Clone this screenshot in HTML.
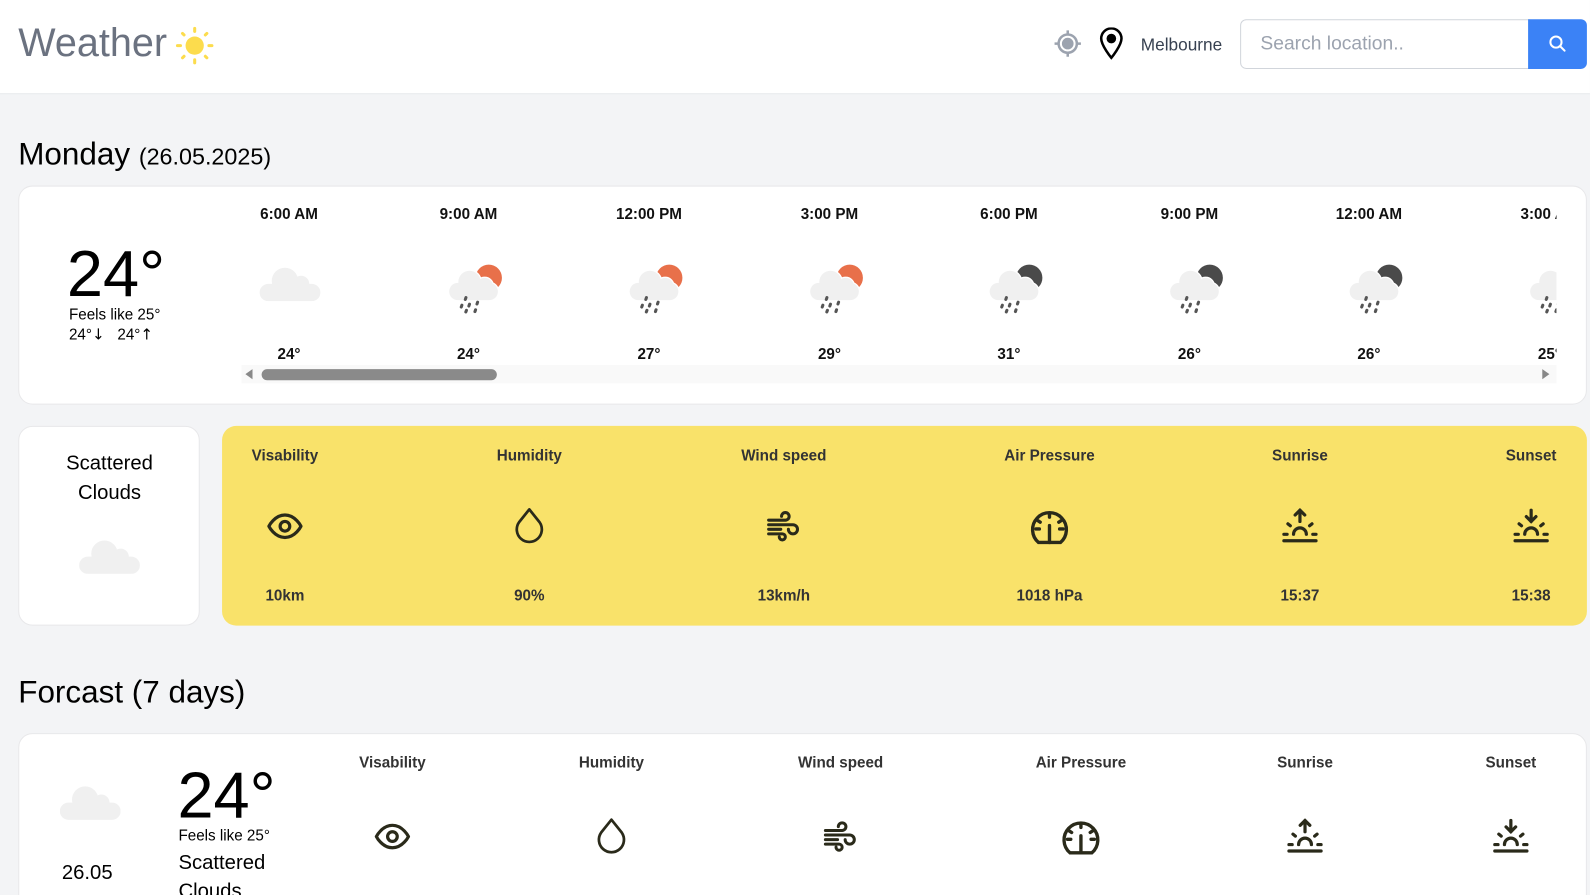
<!DOCTYPE html>
<html><head><meta charset="utf-8"><style>
*{box-sizing:border-box;margin:0;padding:0}
body{width:1590px;height:895px;overflow:hidden;background:#f3f4f6;font-family:"Liberation Sans",sans-serif;color:#000;position:relative}
#w{position:absolute;left:0;top:0;width:1568px;height:883px;overflow:hidden;transform:scale(1.014);transform-origin:0 0}
.a{position:absolute}
.hdr{left:0;top:0;width:1590px;height:93px;background:#fff;border-bottom:1px solid #e5e7eb}
.card{background:#fff;border:1px solid #e8e8ea;border-radius:14px}
.c{transform:translateX(-50%);text-align:center;white-space:nowrap}
.t{font-size:15px;font-weight:bold;color:#111}
.lb{font-size:15px;font-weight:bold;color:#333}
</style></head><body>
<svg width="0" height="0" style="position:absolute">
<defs>
<symbol id="cloud" viewBox="0 0 60 34"><g fill="#f0f0f0"><rect x="0" y="17" width="60" height="17" rx="8.5"/><circle cx="25" cy="14" r="13"/><circle cx="41" cy="17" r="8"/></g></symbol>
<symbol id="rs" viewBox="0 0 80 60"><circle cx="52" cy="24" r="13" fill="#e8704a"/><g fill="#f0f0f0" stroke="#fff" stroke-width="2.5"><rect x="13" y="29" width="48" height="17" rx="8.5"/><circle cx="33" cy="28" r="11"/><circle cx="48" cy="32" r="8"/></g><g fill="#f0f0f0"><rect x="13" y="29" width="48" height="17" rx="8.5"/><circle cx="33" cy="28" r="11"/><circle cx="48" cy="32" r="8"/></g><g stroke="#555" stroke-width="3" stroke-linecap="round"><path d="M29.5 43.5l-.6 1.8M25.5 51l-.6 1.8M33 50l-.6 1.8M41 48l-.6 1.8M30 56l-.6 1.6M39 55.5l-.6 1.8"/></g></symbol>
<symbol id="rm" viewBox="0 0 80 60"><circle cx="52" cy="24" r="13" fill="#4a4a4a"/><g fill="#f0f0f0" stroke="#fff" stroke-width="2.5"><rect x="13" y="29" width="48" height="17" rx="8.5"/><circle cx="33" cy="28" r="11"/><circle cx="48" cy="32" r="8"/></g><g fill="#f0f0f0"><rect x="13" y="29" width="48" height="17" rx="8.5"/><circle cx="33" cy="28" r="11"/><circle cx="48" cy="32" r="8"/></g><g stroke="#555" stroke-width="3" stroke-linecap="round"><path d="M29.5 43.5l-.6 1.8M25.5 51l-.6 1.8M33 50l-.6 1.8M41 48l-.6 1.8M30 56l-.6 1.6M39 55.5l-.6 1.8"/></g></symbol>
<symbol id="eye" viewBox="0 0 24 24" fill="none" stroke="#2a2a1a" stroke-width="2" stroke-linecap="round" stroke-linejoin="round"><path d="M2 12s3.5-7 10-7 10 7 10 7-3.5 7-10 7S2 12 2 12z"/><circle cx="12" cy="12" r="3"/></symbol>
<symbol id="drop" viewBox="0 0 24 24" fill="none" stroke="#2a2a1a" stroke-width="1.7" stroke-linejoin="round"><path d="M12 1.5L5.6 9.5A7.8 7.8 0 1 0 18.4 9.5z"/></symbol>
<symbol id="wind" viewBox="0 0 24 24" fill="none" stroke="#2a2a1a" stroke-width="2" stroke-linecap="round"><path d="M2 8h11a2.5 2.5 0 1 0-2.5-2.5M2 11h16a3 3 0 1 1-3 3M2 14h8M2 17h9a2 2 0 1 1-2 2"/></symbol>
<symbol id="gauge" viewBox="0 0 24 24" fill="none" stroke="#2a2a1a" stroke-width="2" stroke-linecap="round"><path d="M5.5 21A10 10 0 1 1 18.5 21z"/><path d="M12 4v2M5 8l1.5 1M19 8l-1.5 1M4 13h2M18 13h2M12 11v10"/></symbol>
<symbol id="sunup" viewBox="0 0 24 24" fill="none" stroke="#2a2a1a" stroke-width="2" stroke-linecap="round"><path d="M12 2v7M9 5l3-3 3 3M4.5 10.5l1.5 1.2M19.5 10.5L18 11.7M2 17h2M20 17h2M8 17a4 4 0 0 1 8 0M2 21h20"/></symbol>
<symbol id="sundown" viewBox="0 0 24 24" fill="none" stroke="#2a2a1a" stroke-width="2" stroke-linecap="round"><path d="M12 2v7M9 6l3 3 3-3M4.5 10.5l1.5 1.2M19.5 10.5L18 11.7M2 17h2M20 17h2M8 17a4 4 0 0 1 8 0M2 21h20"/></symbol>
</defs></svg>
<div id="w">
<div class="a hdr"></div>
<div class="a" style="left:18px;top:21px;font-size:39px;color:#6b7280">Weather</div>
<svg class="a" style="left:173px;top:26px" width="38" height="38" viewBox="0 0 38 38"><circle cx="19" cy="19" r="9" fill="#fcdc4d"/><g stroke="#fcdc4d" stroke-width="3" stroke-linecap="round"><path d="M19 2v3M19 33v3M2 19h3M33 19h3M7 7l1.5 1.5M29.5 29.5L31 31M31 7l-1.5 1.5M7 31l1.5-1.5"/></g></svg>
<svg class="a" style="left:1039px;top:29px" width="28" height="28" viewBox="0 0 28 28" fill="none" stroke="#9ca3af" stroke-width="2.5"><circle cx="14" cy="14" r="9"/><circle cx="14" cy="14" r="4.5" fill="#9ca3af"/><path d="M14 1v4M14 23v4M1 14h4M23 14h4"/></svg>
<svg class="a" style="left:1083px;top:27px" width="26" height="32" viewBox="0 0 26 32" fill="none" stroke="#000" stroke-width="2.5"><path d="M13 30C13 30 3 18 3 11a10 10 0 0 1 20 0c0 7-10 19-10 19z"/><circle cx="13" cy="11" r="3.5" fill="#000"/></svg>
<div class="a" style="left:1125px;top:35px;font-size:17px;color:#374151">Melbourne</div>
<div class="a" style="left:1223px;top:19px;width:286px;height:49px;border:1px solid #d1d5db;border-radius:6px 0 0 6px;background:#fff"></div>
<div class="a" style="left:1243px;top:33px;font-size:19px;color:#9ca3af">Search location..</div>
<div class="a" style="left:1507px;top:19px;width:58px;height:49px;background:#3b82f6;border-radius:0 6px 6px 0"></div>
<svg class="a" style="left:1527px;top:34px" width="18" height="18" viewBox="0 0 18 18" fill="none" stroke="#fff" stroke-width="2" stroke-linecap="round"><circle cx="7.5" cy="7.5" r="5.5"/><path d="M11.5 11.5L16 16"/></svg>

<div class="a" style="left:18px;top:134px;font-size:31px">Monday <span style="font-size:23px">(26.05.2025)</span></div>

<div class="a card" style="left:18px;top:183px;width:1547px;height:216px"></div>
<div class="a" style="left:66px;top:236px;font-size:64px;line-height:68px">24°</div>
<div class="a" style="left:68px;top:302px;font-size:15px">Feels like 25°</div>
<div class="a" style="left:68px;top:321px;font-size:15px">24°<span style="font-family:'DejaVu Sans'">↓</span>&nbsp;&nbsp;&nbsp;24°<span style="font-family:'DejaVu Sans'">↑</span></div>

<div class="a" style="left:238px;top:190px;width:1297px;height:200px;overflow:hidden">
 <div class="a t c" style="left:47px;top:13px">6:00 AM</div>
 <div class="a t c" style="left:224px;top:13px">9:00 AM</div>
 <div class="a t c" style="left:402px;top:13px">12:00 PM</div>
 <div class="a t c" style="left:580px;top:13px">3:00 PM</div>
 <div class="a t c" style="left:757px;top:13px">6:00 PM</div>
 <div class="a t c" style="left:935px;top:13px">9:00 PM</div>
 <div class="a t c" style="left:1112px;top:13px">12:00 AM</div>
 <div class="a t c" style="left:1290px;top:13px">3:00 AM</div>
 <svg class="a" style="left:18px;top:73px" width="60" height="34"><use href="#cloud"/></svg>
 <svg class="a" style="left:192px;top:60px" width="80" height="60"><use href="#rs"/></svg>
 <svg class="a" style="left:370px;top:60px" width="80" height="60"><use href="#rs"/></svg>
 <svg class="a" style="left:548px;top:60px" width="80" height="60"><use href="#rs"/></svg>
 <svg class="a" style="left:725px;top:60px" width="80" height="60"><use href="#rm"/></svg>
 <svg class="a" style="left:903px;top:60px" width="80" height="60"><use href="#rm"/></svg>
 <svg class="a" style="left:1080px;top:60px" width="80" height="60"><use href="#rm"/></svg>
 <svg class="a" style="left:1258px;top:60px" width="80" height="60"><use href="#rm"/></svg>
 <div class="a t c" style="left:47px;top:151px">24°</div>
 <div class="a t c" style="left:224px;top:151px">24°</div>
 <div class="a t c" style="left:402px;top:151px">27°</div>
 <div class="a t c" style="left:580px;top:151px">29°</div>
 <div class="a t c" style="left:757px;top:151px">31°</div>
 <div class="a t c" style="left:935px;top:151px">26°</div>
 <div class="a t c" style="left:1112px;top:151px">26°</div>
 <div class="a t c" style="left:1290px;top:151px">25°</div>
 <div class="a" style="left:0;top:170px;width:1297px;height:18px;background:#f9f9f9"></div>
 <div class="a" style="left:4px;top:174px;width:0;height:0;border-top:5px solid transparent;border-bottom:5px solid transparent;border-right:7px solid #888"></div>
 <div class="a" style="left:1283px;top:174px;width:0;height:0;border-top:5px solid transparent;border-bottom:5px solid transparent;border-left:7px solid #888"></div>
 <div class="a" style="left:20px;top:174px;width:232px;height:11px;background:#8a8a8a;border-radius:6px"></div>
</div>

<div class="a card" style="left:18px;top:420px;width:179px;height:197px"></div>
<div class="a c" style="left:108px;top:443px;font-size:20px;line-height:29px">Scattered<br>Clouds</div>
<svg class="a" style="left:78px;top:532px" width="60" height="34"><use href="#cloud"/></svg>

<div class="a" style="left:219px;top:420px;width:1346px;height:197px;background:#f9e26a;border-radius:14px"></div>
<div class="a lb c" style="left:281px;top:441px">Visability</div>
<div class="a lb c" style="left:522px;top:441px">Humidity</div>
<div class="a lb c" style="left:773px;top:441px">Wind speed</div>
<div class="a lb c" style="left:1035px;top:441px">Air Pressure</div>
<div class="a lb c" style="left:1282px;top:441px">Sunrise</div>
<div class="a lb c" style="left:1510px;top:441px">Sunset</div>
<svg class="a" style="left:262px;top:500px" width="38" height="38"><use href="#eye"/></svg>
<svg class="a" style="left:503px;top:500px" width="38" height="38"><use href="#drop"/></svg>
<svg class="a" style="left:755px;top:501px" width="36" height="36"><use href="#wind"/></svg>
<svg class="a" style="left:1015px;top:500px" width="40" height="40"><use href="#gauge"/></svg>
<svg class="a" style="left:1263px;top:500px" width="38" height="38"><use href="#sunup"/></svg>
<svg class="a" style="left:1491px;top:500px" width="38" height="38"><use href="#sundown"/></svg>
<div class="a lb c" style="left:281px;top:579px">10km</div>
<div class="a lb c" style="left:522px;top:579px">90%</div>
<div class="a lb c" style="left:773px;top:579px">13km/h</div>
<div class="a lb c" style="left:1035px;top:579px">1018 hPa</div>
<div class="a lb c" style="left:1282px;top:579px">15:37</div>
<div class="a lb c" style="left:1510px;top:579px">15:38</div>

<div class="a" style="left:18px;top:665px;font-size:31px">Forcast (7 days)</div>
<div class="a card" style="left:18px;top:723px;width:1547px;height:200px"></div>
<svg class="a" style="left:59px;top:773px" width="60" height="37"><use href="#cloud"/></svg>
<div class="a" style="left:61px;top:850px;font-size:20px">26.05</div>
<div class="a" style="left:175px;top:750px;font-size:64px;line-height:68px">24°</div>
<div class="a" style="left:176px;top:816px;font-size:15px">Feels like 25°</div>
<div class="a" style="left:176px;top:837px;font-size:20px;line-height:28px">Scattered<br>Clouds</div>
<div class="a lb c" style="left:387px;top:744px">Visability</div>
<div class="a lb c" style="left:603px;top:744px">Humidity</div>
<div class="a lb c" style="left:829px;top:744px">Wind speed</div>
<div class="a lb c" style="left:1066px;top:744px">Air Pressure</div>
<div class="a lb c" style="left:1287px;top:744px">Sunrise</div>
<div class="a lb c" style="left:1490px;top:744px">Sunset</div>
<svg class="a" style="left:368px;top:806px" width="38" height="38"><use href="#eye"/></svg>
<svg class="a" style="left:584px;top:806px" width="38" height="38"><use href="#drop"/></svg>
<svg class="a" style="left:811px;top:807px" width="36" height="36"><use href="#wind"/></svg>
<svg class="a" style="left:1046px;top:806px" width="40" height="40"><use href="#gauge"/></svg>
<svg class="a" style="left:1268px;top:806px" width="38" height="38"><use href="#sunup"/></svg>
<svg class="a" style="left:1471px;top:806px" width="38" height="38"><use href="#sundown"/></svg>
</div>
</body></html>
